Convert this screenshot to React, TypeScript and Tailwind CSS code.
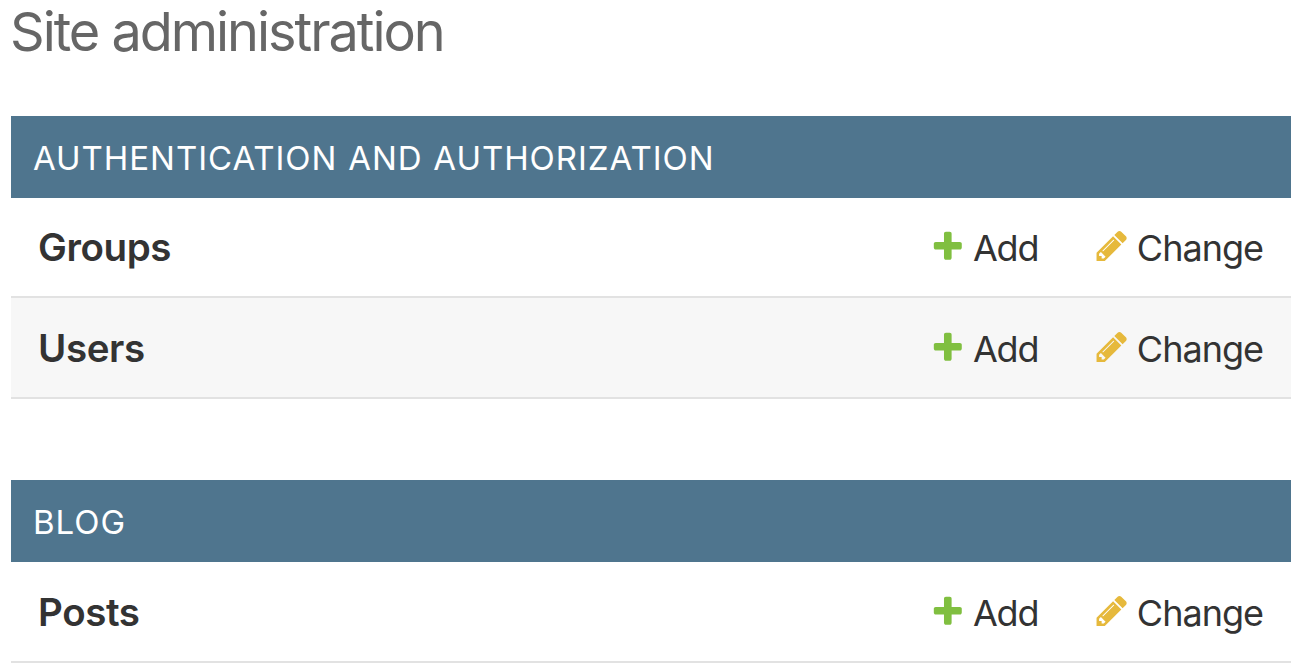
import React from "react";

function Plus() {
  return (
    <svg className="mb-[4px] h-[35.6px] w-[35.6px] shrink-0" viewBox="0 0 1792 1792" fill="#80bf40">
      <path d="M1600 796v192q0 40-28 68t-68 28h-416v416q0 40-28 68t-68 28h-192q-40 0-68-28t-28-68v-416h-416q-40 0-68-28t-28-68v-192q0-40 28-68t68-28h416v-416q0-40 28-68t68-28h192q40 0 68 28t28 68v416h416q40 0 68 28t28 68z" />
    </svg>
  );
}

function Pencil() {
  return (
    <svg className="mb-[4px] h-[35.6px] w-[35.6px] shrink-0" viewBox="0 0 1792 1792" fill="#e6b93c">
      <path d="M491 1536l91-91-235-235-91 91v107h128v128h107zm523-928q0-22-22-22-10 0-17 7l-542 542q-7 7-7 17 0 22 22 22 10 0 17-7l542-542q7-7 7-17zm-54-192l416 416-832 832h-416v-416zm683 96q0 53-37 90l-166 166-416-416 166-165q36-38 90-38 53 0 91 38l235 234q37 39 37 91z" />
    </svg>
  );
}

function Row({ name, className }: { name: string; className: string }) {
  return (
    <div className={`flex items-center border-b-2 border-[#e2e2e2] pl-[27px] pr-[28px] pt-[2px] text-[#333333] ${className}`}>
      <span className="text-[38.5px] font-semibold tracking-[-0.4px]">{name}</span>
      <span className="ml-auto flex items-center gap-[7.2px] text-[36px] tracking-[-1.2px]"><Plus />Add</span>
      <span className="ml-[55.5px] flex items-center gap-[7.5px] text-[36px] tracking-[-1px]"><Pencil />Change</span>
    </div>
  );
}

function Caption({ children }: { children: string }) {
  return (
    <h2 className="flex h-[82px] items-center bg-[#4f758e] pl-[22px] pt-[3px] text-[33px] font-normal tracking-[0.95px] [word-spacing:0.6px] text-white">{children}</h2>
  );
}

export default function App() {
  return (
    <main className="h-[667px] w-[1302px] overflow-hidden bg-white px-[11px] font-['Inter',sans-serif]">
      <h1 className="-ml-[1px] h-[116px] pt-[4px] text-[54px] leading-[56px] font-normal tracking-[-2.02px] text-[#666666]">Site administration</h1>
      <section className="mb-[81px]">
        <Caption>AUTHENTICATION AND AUTHORIZATION</Caption>
        <Row name="Groups" className="h-[100px] bg-white" />
        <Row name="Users" className="h-[101px] bg-[#f7f7f7]" />
      </section>
      <section>
        <Caption>BLOG</Caption>
        <Row name="Posts" className="h-[101px] bg-white" />
      </section>
    </main>
  );
}
